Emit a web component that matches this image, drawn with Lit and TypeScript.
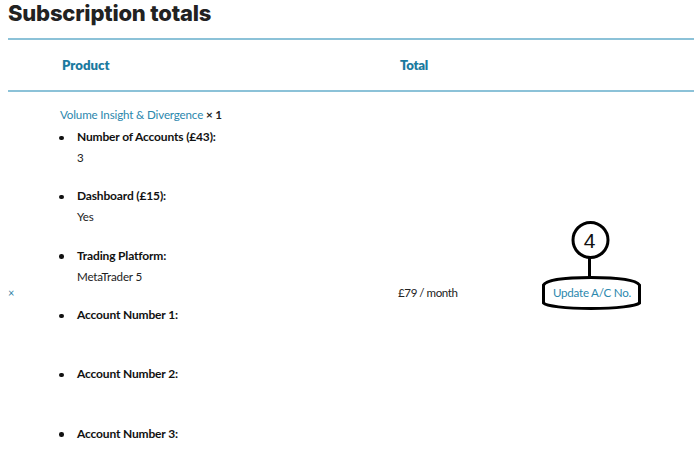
import { LitElement, html, css } from "lit";
import { customElement } from "lit/decorators.js";

const ITEMS: [string, string][] = [
  ["Number of Accounts (£43):", "3"],
  ["Dashboard (£15):", "Yes"],
  ["Trading Platform:", "MetaTrader 5"],
  ["Account Number 1:", ""],
  ["Account Number 2:", ""],
  ["Account Number 3:", ""],
];

@customElement("app-root")
export class AppRoot extends LitElement {
  static styles = css`
    :host { display: block; position: relative; width: 700px; height: 466px; overflow: hidden; background: #fff; color: #222; font-family: "Lato", "Noto Sans", sans-serif; font-size: 11.6px; }
    .page { padding: 0 6px 0 8px; }
    h2 { margin: 0; height: 38px; font-family: "Inter", "Roboto", sans-serif; font-weight: 800; font-size: 22px; line-height: 27px; color: #222; letter-spacing: -0.2px; border-bottom: 2px solid #8cc2d8; }
    .grid { display: grid; grid-template-columns: 52px 338px 139px 1fr; }
    .head { display: contents; }
    .head > div { height: 50px; line-height: 51px; border-bottom: 2px solid #8cc2d8; font-weight: 800; font-size: 13.2px; color: #1b7a9f; }
    .head .p { padding-left: 2px; }
    .head .t { padding-left: 2px; letter-spacing: -0.3px; }
    .cell { padding-top: 13px; height: 388px; box-sizing: border-box; display: flex; align-items: center; letter-spacing: -0.15px; }
    .rm { color: #2f7fa5; font-size: 11px; }
    .prod { display: block; }
    .name { line-height: 20px; color: #2b87ad; }
    .name b { color: #222; font-size: 11.6px; }
    ul { margin: 1.2px 0 0; padding: 0; list-style: none; }
    li { height: 59.3px; display: grid; grid-template-columns: 17px 1fr; grid-template-rows: 21px 21px; }
    li::before { content: ""; width: 4.5px; height: 4.5px; border-radius: 50%; background: #111; margin: 9.5px 0 0 -1px; }
    li b { grid-column: 2; grid-row: 1; line-height: 21px; color: #111; font-size: 12px; letter-spacing: -0.16px; }
    li span { grid-column: 2; grid-row: 2; line-height: 21px; }
    .price { letter-spacing: -0.4px; word-spacing: -0.2px; }
    .action { padding-left: 16px; color: #2b87ad; letter-spacing: -0.25px; }
    .callout { position: absolute; left: 0; top: 0; pointer-events: none; }
    .num { font-family: "Liberation Sans", sans-serif; font-size: 21px; fill: #111; }
  `;
  render() {
    return html`<div class="page">
      <h2>Subscription totals</h2>
      <div class="grid">
        <div class="head"><div></div><div class="p">Product</div><div class="t">Total</div><div></div></div>
        <div class="cell rm">×</div>
        <div class="cell prod">
          <div class="name">Volume Insight &amp; Divergence <b>× 1</b></div>
          <ul>${ITEMS.map(([k, v]) => html`<li><b>${k}</b>${v ? html`<span>${v}</span>` : ""}</li>`)}</ul>
        </div>
        <div class="cell price">£79 / month</div>
        <div class="cell action">Update A/C No.</div>
      </div>
      <svg class="callout" width="700" height="466" viewBox="0 0 700 466" fill="none">
        <circle cx="590.5" cy="240" r="17.5" fill="#fff" stroke="#000" stroke-width="3"></circle>
        <text class="num" x="589.5" y="248" text-anchor="middle">4</text>
        <line x1="589.5" y1="258" x2="589.5" y2="277" stroke="#000" stroke-width="3"></line>
        <path d="M543.5 285 C546 280 565 277.5 591 277.5 C617 277.5 636 280 639.5 285 V303 C636 306 617 308.5 591 308.5 C565 308.5 546 306 543.5 303 Z" stroke="#000" stroke-width="3"></path>
      </svg>
    </div>`;
  }
}
